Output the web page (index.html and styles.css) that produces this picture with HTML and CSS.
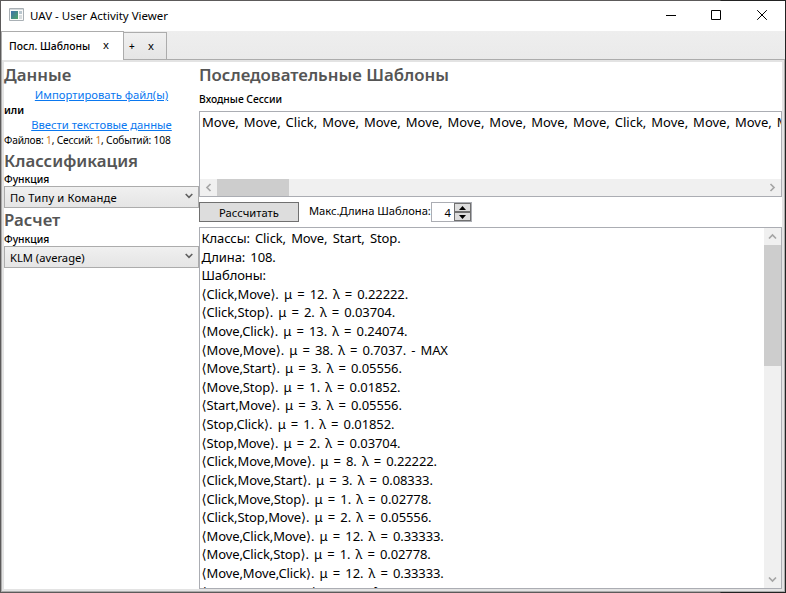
FILE: index.html
```html
<!DOCTYPE html>
<html lang="ru">
<head>
<meta charset="utf-8">
<title>UAV - User Activity Viewer</title>
<link rel="stylesheet" href="styles.css">
</head>
<body>
<div class="window">
  <header class="titlebar">
    <svg class="app-icon" width="16" height="14" viewBox="0 0 16 14"><defs><linearGradient id="g" x1="0" y1="0" x2="1" y2="1"><stop offset="0" stop-color="#3d6fae"/><stop offset="1" stop-color="#4fa565"/></linearGradient></defs><path fill="#fafafa" stroke="#a9b0b5" d="M.5.5h14v12H.5z"/><path fill="#d5dadd" d="M1 1h13v1H1z"/><path fill="url(#g)" d="M2 3h7v8H2z"/><path fill="#b9c6ce" d="M10 3h3v3h-3z"/><path fill="#d8dddf" d="M10 7h3v4h-3z"/></svg>
    <span class="caption">UAV - User Activity Viewer</span>
    <svg class="controls" width="120" height="30" viewBox="0 0 120 30" fill="none" stroke="#000"><path d="M14 14.5h10M59.500 9.500h9v9h-9z"/><path d="M105.200 9.200l9.600 9.600M114.800 9.200l-9.600 9.600"/></svg>
  </header>
  <nav class="tabs">
    <div class="tab active"><span class="tab-name">Посл. Шаблоны</span><span class="close">x</span></div>
    <div class="tab"><span class="plus">+</span><span class="close">x</span></div>
  </nav>
  <main class="content">
    <aside class="side">
      <h2 class="h-data">Данные</h2>
      <a class="link import">Импортировать файл(ы)</a>
      <div class="or">или</div>
      <a class="link enter">Ввести текстовые данные</a>
      <div class="stats">Файлов: <i>1</i>, Сессий: <i>1</i>, Событий: 108</div>
      <h2 class="h-class">Классификация</h2>
      <div class="label">Функция</div>
      <div class="combo"><span class="combo-type">По Типу и Команде</span><svg width="8" height="6" viewBox="0 0 8 6"><path d="M.7 1L4 4.300 7.300 1" fill="none" stroke="#606060" stroke-width="1.600"/></svg></div>
      <h2 class="h-calc">Расчет</h2>
      <div class="label">Функция</div>
      <div class="combo"><span class="combo-klm">KLM (average)</span><svg width="8" height="6" viewBox="0 0 8 6"><path d="M.7 1L4 4.300 7.300 1" fill="none" stroke="#606060" stroke-width="1.600"/></svg></div>
    </aside>
    <section class="work">
      <h2 class="h-main">Последовательные Шаблоны</h2>
      <div class="label sessions-label">Входные Сессии</div>
      <div class="box sessions">
        <div class="line">Move, Move, Click, Move, Move, Move, Move, Move, Move, Move, Click, Move, Move, Move, Move</div>
        <div class="hscroll"><svg width="17" height="17" viewBox="0 0 17 17"><path d="M10.500 5L7 8.500l3.500 3.500"/></svg><div class="hthumb"></div><svg class="end" width="17" height="17" viewBox="0 0 17 17"><path d="M6.500 5L10 8.500 6.500 12"/></svg></div>
      </div>
      <div class="actions">
        <div class="button">Рассчитать</div>
        <span class="max-label">Макс.Длина Шаблона:</span>
        <div class="spinner"><span class="value">4</span><div class="arrows"><div><svg width="7" height="4" viewBox="0 0 7 4"><path d="M3.500 0L7 4H0z"/></svg></div><div><svg width="7" height="4" viewBox="0 0 7 4"><path d="M3.500 4L7 0H0z"/></svg></div></div></div>
      </div>
      <div class="box results">
        <div class="lines">
          <div>Классы: Click, Move, Start, Stop.</div>
          <div>Длина: 108.</div>
          <div>Шаблоны:</div>
          <div>⟨Click,Move⟩. μ = 12. λ = 0.22222.</div>
          <div>⟨Click,Stop⟩. μ = 2. λ = 0.03704.</div>
          <div>⟨Move,Click⟩. μ = 13. λ = 0.24074.</div>
          <div>⟨Move,Move⟩. μ = 38. λ = 0.7037. - MAX</div>
          <div>⟨Move,Start⟩. μ = 3. λ = 0.05556.</div>
          <div>⟨Move,Stop⟩. μ = 1. λ = 0.01852.</div>
          <div>⟨Start,Move⟩. μ = 3. λ = 0.05556.</div>
          <div>⟨Stop,Click⟩. μ = 1. λ = 0.01852.</div>
          <div>⟨Stop,Move⟩. μ = 2. λ = 0.03704.</div>
          <div>⟨Click,Move,Move⟩. μ = 8. λ = 0.22222.</div>
          <div>⟨Click,Move,Start⟩. μ = 3. λ = 0.08333.</div>
          <div>⟨Click,Move,Stop⟩. μ = 1. λ = 0.02778.</div>
          <div>⟨Click,Stop,Move⟩. μ = 2. λ = 0.05556.</div>
          <div>⟨Move,Click,Move⟩. μ = 12. λ = 0.33333.</div>
          <div>⟨Move,Click,Stop⟩. μ = 1. λ = 0.02778.</div>
          <div>⟨Move,Move,Click⟩. μ = 12. λ = 0.33333.</div>
          <div>⟨Move,Move,Move⟩. μ = 23. λ = 0.63889.</div>
        </div>
        <div class="vscroll"><svg width="17" height="17" viewBox="0 0 17 17"><path d="M5 10.500L8.500 7l3.500 3.500"/></svg><div class="vthumb"></div><svg class="end" width="17" height="17" viewBox="0 0 17 17"><path d="M5 6.500L8.500 10 12 6.500"/></svg></div>
      </div>
    </section>
  </main>
</div>
</body>
</html>
```
FILE: styles.css
```css
* { box-sizing: border-box; }
body {
  margin: 0; width: 786px; height: 593px; overflow: hidden;
  padding: 1px; border: 0; color: #000;
  background: linear-gradient(90deg, #5c5a5a 0 720px, #222 721px);
  font: 11.2px/16px "Noto Sans", "Open Sans", "DejaVu Sans", sans-serif;
  white-space: nowrap;
}
svg { display: block; flex: none; }
.window { height: 591px; width: 784px; background: #eee; display: flex; flex-direction: column; }
.titlebar { height: 30px; flex: none; background: #fff; display: flex; padding-left: 8px; }
.app-icon { margin-top: 7px; }
.caption { margin-left: 5px; line-height: 29px; font-size: 11.5px; }
.controls { margin-left: auto; margin-right: 13px; }
.tabs { height: 29px; flex: none; display: flex; align-items: flex-end; border-bottom: 1px solid #acacac; background: linear-gradient(#eee, #eaeaea); }
.tab { height: 27px; width: 43px; border: 1px solid #acacac; border-left: 0; border-bottom: 0; background: linear-gradient(#f0f0f0, #e5e5e5); display: flex; line-height: 25px; }
.tab.active { height: 29px; width: 123px; margin-bottom: -1px; background: #fff; border-left: 1px solid #acacac; line-height: 28px; padding-left: 7px; }
.tab-name { width: 82px; margin-right: 12px; font-size: 10.4px; font-weight: 500; }
.active .close { line-height: 26px; }
.plus { width: 6px; margin: 0 13px 0 5px; line-height: 27px; font-weight: 500; font-size: 10px; }
.content { flex: 1; min-height: 0; border: solid #acacac; border-width: 0 1px 1px; display: flex; padding: 2px 2px 2px; background: #e3e3e3; }
.side { width: 195px; background: #fff; display: flex; flex-direction: column; align-items: flex-start; }
.work { flex: 1; min-width: 0; background: #fff; display: flex; flex-direction: column; }
h2 { margin: 0; font-size: 16.8px; line-height: 25px; height: 24px; font-weight: 600; color: #555; }
.link { color: #0a78f0; text-decoration: underline; align-self: center; font-size: 11.25px; height: 17px; line-height: 17px; }
.or { font-size: 10.5px; font-weight: 600; line-height: 14px; height: 13px; }
.stats { font-size: 10.2px; letter-spacing: -.18px; height: 15px; line-height: 14px; }
.stats i { font-style: normal; color: #ce7b22; }
.label { font-size: 10.3px; font-weight: 500; height: 13px; line-height: 12px; }
.combo { width: 195px; height: 22px; border: 1px solid #acacac; background: linear-gradient(#f0f0f0, #e5e5e5); display: flex; align-items: center; justify-content: space-between; padding: 1px 5px 0 5px; }
.combo svg { margin-top: -4px; }
.combo-type { letter-spacing: .17px; }
.h-class { height: 25px; }
.h-data { height: 24px; }
.h-calc { height: 25px; line-height: 24px; }
.side > .combo { margin-bottom: 0; }
.h-main { line-height: 26px; }
.sessions-label { margin: 7px 0 5px; }
.box { border: 1px solid #abadb3; background: #fff; overflow: hidden; }
.sessions { height: 86px; width: 583px; display: flex; flex-direction: column; justify-content: space-between; font-size: 13px; }
.line { padding-left: 2px; line-height: 20px; word-spacing: 1.6px; }
.hscroll { height: 17px; background: #f0f0f0; display: flex; }
.hthumb { width: 72px; background: #cdcdcd; }
.hscroll .end { margin-left: auto; }
.hscroll path, .vscroll path { fill: none; stroke: #a5a5a5; stroke-width: 1.7; }
.actions { height: 30px; padding-top: 5px; display: flex; align-items: flex-start; }
.button { width: 100px; height: 20px; border: 1px solid #707070; background: #ddd; text-align: center; line-height: 20px; }
.max-label { width: 122px; margin-left: 10px; line-height: 18px; letter-spacing: -.03px; }
.spinner { height: 20px; width: 41px; border: 1px solid #abadb3; display: flex; }
.value { width: 22px; padding-right: 3px; text-align: right; line-height: 20px; }
.arrows { width: 17px; display: flex; flex-direction: column; }
.arrows div { flex: 1; border: 1px solid #707070; background: #ddd; display: flex; align-items: center; justify-content: center; }
.results { width: 583px; height: 362px; display: flex; justify-content: space-between; }
.lines { padding: 1px 0 0 1.5px; font-size: 13px; line-height: 18.62px; letter-spacing: -.1px; word-spacing: 1.9px; }
.lines div { height: 18.62px; }
.vscroll { width: 17px; background: #f0f0f0; display: flex; flex-direction: column; }
.vthumb { height: 121px; background: #cdcdcd; }
.vscroll .end { margin-top: auto; }
```
